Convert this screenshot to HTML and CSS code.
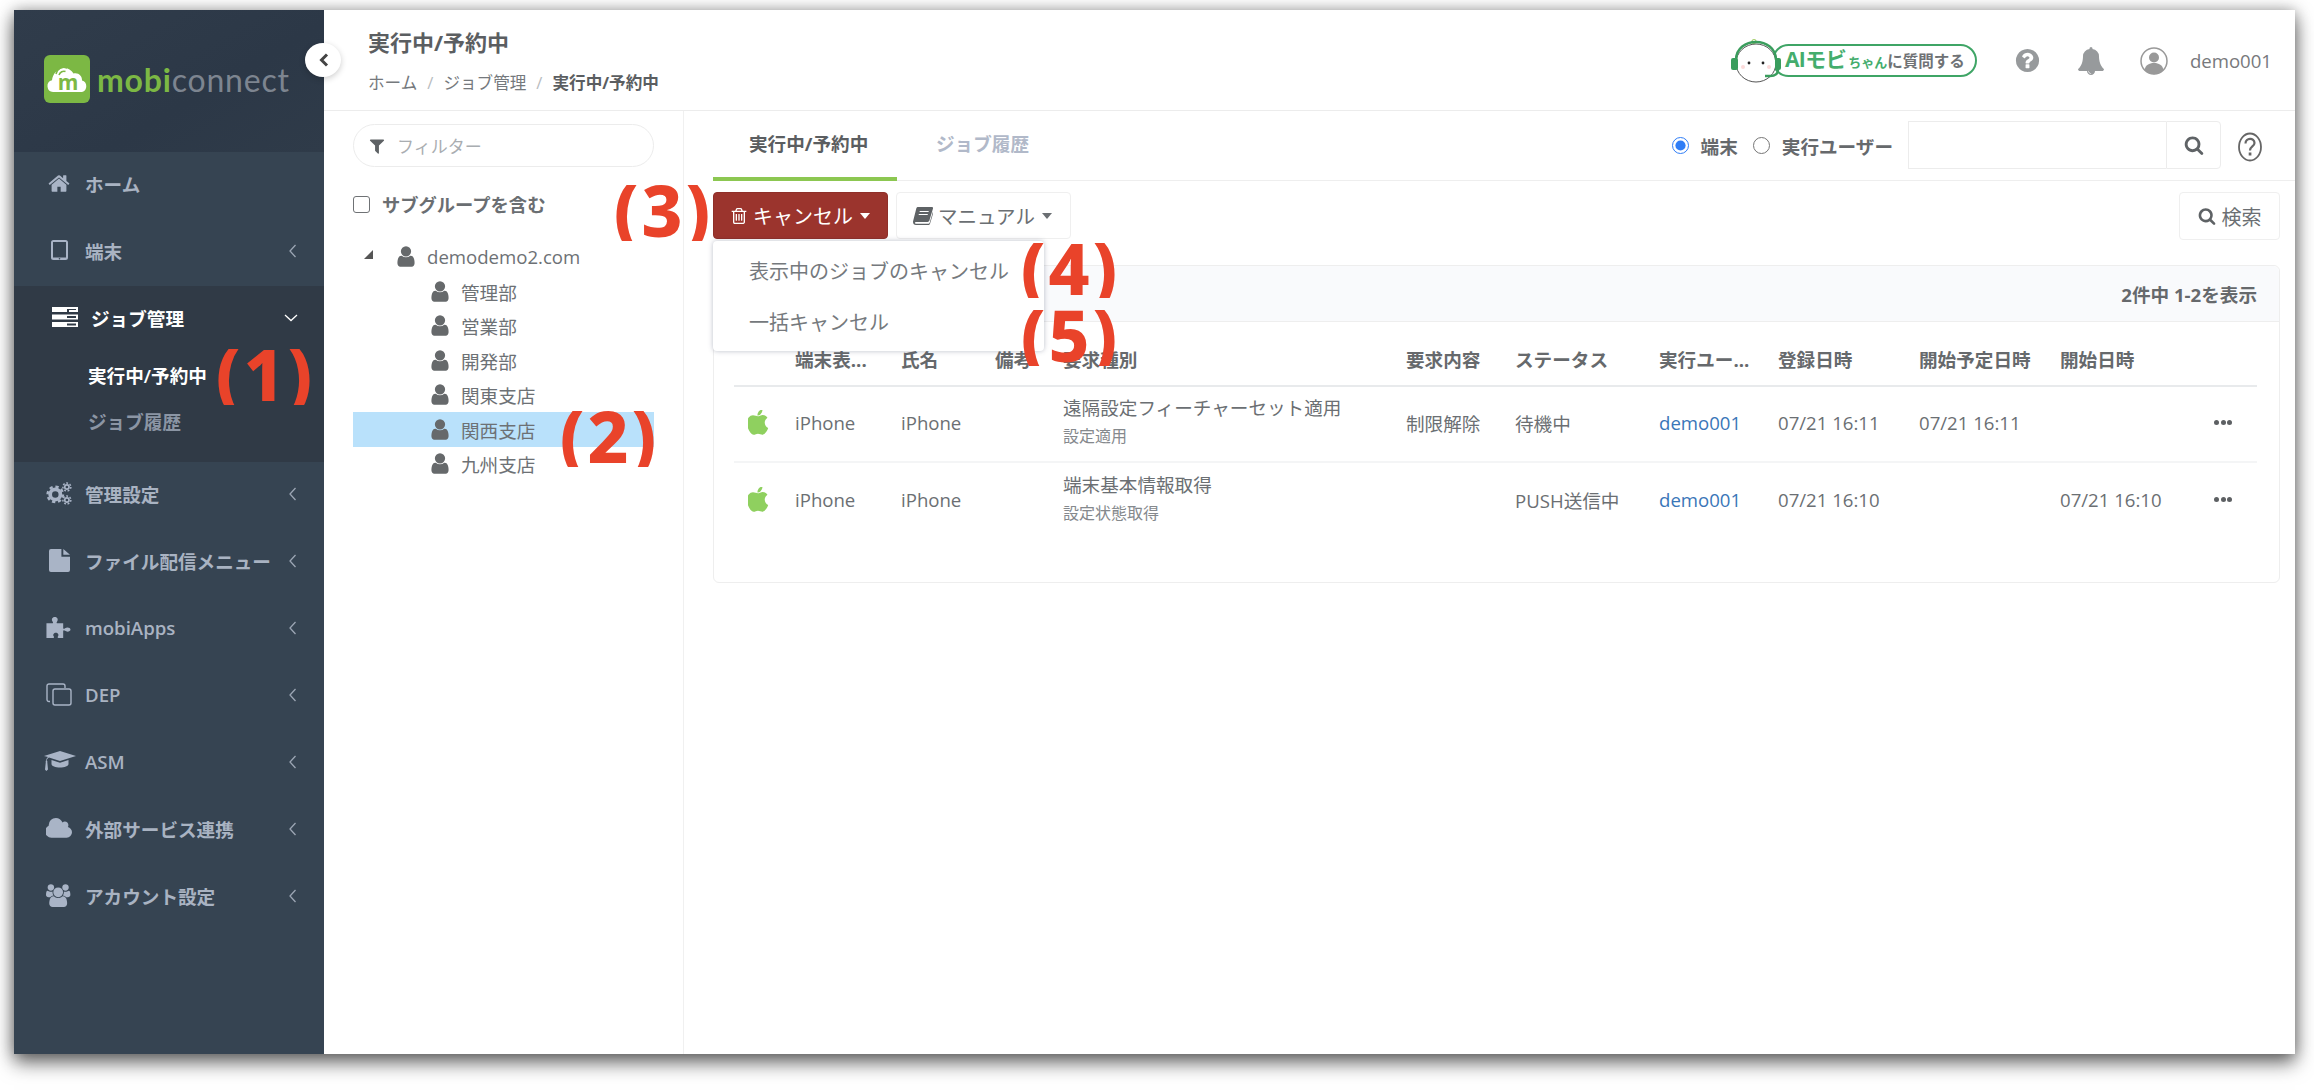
FILE: index.html
```html
<!DOCTYPE html>
<html lang="ja">
<head>
<meta charset="utf-8">
<title>実行中/予約中</title>
<link rel="stylesheet" href="styles.css">
</head>
<body>
<svg class="defs" aria-hidden="true">
  <symbol id="i-home" viewBox="0 0 1792 1792"><path d="M1472 992v480q0 26-19 45t-45 19h-384v-384h-256v384h-384q-26 0-45-19t-19-45v-480q0-1 .5-3t.5-3l575-474 575 474q1 2 1 6zm223-69l-62 74q-8 9-21 11h-3q-13 0-21-7l-692-577-692 577q-12 8-24 7-13-2-21-11l-62-74q-8-10-7-23.5t11-21.5l719-599q32-26 76-26t76 26l244 204v-195q0-14 9-23t23-9h192q14 0 23 9t9 23v408l219 182q10 8 11 21.5t-7 23.5z"/></symbol>
  <symbol id="i-user" viewBox="224 128 1344 1536"><path d="M1536 1399q0 109-62.5 187t-150.5 78h-854q-88 0-150.5-78t-62.5-187q0-85 8.5-160.5t31.5-152 58.5-131 94-89 134.5-34.5q131 128 313 128t313-128q76 0 134.5 34.5t94 89 58.5 131 31.5 152 8.5 160.5zm-256-887q0 159-112.5 271.5t-271.5 112.5-271.5-112.5-112.5-271.5 112.5-271.5 271.5-112.5 271.5 112.5 112.5 271.5z"/></symbol>
  <symbol id="i-search" viewBox="0 0 1792 1792"><path d="M1216 832q0-185-131.5-316.5t-316.5-131.5-316.5 131.5-131.5 316.5 131.5 316.5 316.5 131.5 316.5-131.5 131.5-316.5zm512 832q0 52-38 90t-90 38q-54 0-90-38l-343-342q-179 124-399 124-143 0-273.5-55.5t-225-150-150-225-55.5-273.5 55.5-273.5 150-225 225-150 273.5-55.5 273.5 55.5 225 150 150 225 55.5 273.5q0 220-124 399l343 343q37 37 37 90z"/></symbol>
  <symbol id="i-filter" viewBox="0 0 1792 1792"><path d="M1595 295q17 41-14 70l-493 493v742q0 42-39 59-13 5-25 5-27 0-45-19l-256-256q-19-19-19-45v-486l-493-493q-31-29-14-70 17-39 59-39h1280q42 0 59 39z"/></symbol>
  <symbol id="i-bell" viewBox="0 0 1792 1792"><path d="M912 1696q0-16-16-16-59 0-101.5-42.5t-42.5-101.5q0-16-16-16t-16 16q0 73 51.5 124.5t124.5 51.5q16 0 16-16zm816-288q0 52-38 90t-90 38h-448q0 106-75 181t-181 75-181-75-75-181h-448q-52 0-90-38t-38-90q50-42 91-88t85-119.5 74.5-158.5 50-206 19.5-260q0-152 117-282.5t307-158.5q-8-19-8-39 0-40 28-68t68-28 68 28 28 68q0 20-8 39 190 28 307 158.5t117 282.5q0 139 19.5 260t50 206 74.5 158.5 85 119.5 91 88z"/></symbol>
  <symbol id="i-qc" viewBox="0 0 1792 1792"><path d="M1024 1376v-192q0-14-9-23t-23-9h-192q-14 0-23 9t-9 23v192q0 14 9 23t23 9h192q14 0 23-9t9-23zm256-672q0-88-55.5-163t-138.5-116-170-41q-243 0-371 213-15 24 8 42l132 100q7 6 19 6 16 0 25-12 53-68 86-92 34-24 86-24 48 0 85.5 26t37.5 59q0 38-20 61t-68 45q-63 28-115.5 86.5t-52.5 125.5v36q0 14 9 23t23 9h192q14 0 23-9t9-23q0-19 21.5-49.5t54.5-49.5q32-18 49-28.5t46-35 44.5-48 28-60.5 12.5-81zm384 192q0 209-103 385.5t-279.5 279.5-385.5 103-385.5-103-279.5-279.5-103-385.5 103-385.5 279.5-279.5 385.5-103 385.5 103 279.5 279.5 103 385.5z"/></symbol>
  <symbol id="i-apple" viewBox="300 40 1300 1640"><path d="M1585 1215q-39 125-123 250-129 196-257 196-49 0-140-32-86-32-151-32-61 0-142 33-81 34-132 34-152 0-301-259-147-261-147-503 0-228 113-374 113-144 284-144 72 0 177 30 104 30 138 30 45 0 143-34 102-34 173-34 119 0 213 65 52 36 104 100-79 67-114 118-65 94-65 207 0 124 69 223t158 126zm-376-1173q0 61-29 136-30 75-93 138-54 54-108 72-37 11-104 17 3-149 78-257 74-107 250-148 1 3 2.5 11t2.5 11q0 3 .5 7.5t.5 7.5z"/></symbol>
  <symbol id="i-cloud" viewBox="0 224 1856 1312"><path d="M1856 1152q0 159-112.5 271.5t-271.5 112.5h-1088q-185 0-316.5-131.5t-131.5-316.5q0-132 71-241.5t187-163.5q-2-28-2-43 0-212 150-362t362-150q158 0 286.5 88t187.5 230q70-62 166-62 106 0 181 75t75 181q0 75-41 138 129 30 213 134.5t84 239.5z"/></symbol>
  <symbol id="i-users" viewBox="-64 0 2048 1792"><path d="M529 896q-162 5-265 128h-134q-82 0-138-40.5t-56-118.5q0-353 124-353 6 0 43.5 21t97.5 42.5 119 21.5q67 0 133-23-5 37-5 66 0 139 81 256zm1071 637q0 120-73 189.5t-194 69.5h-874q-121 0-194-69.5t-73-189.5q0-53 3.5-103.5t14-109 26.5-108.5 43-97.5 62-81 85.5-53.5 111.5-20q10 0 43 21.5t73 48 107 48 135 21.5 135-21.5 107-48 73-48 43-21.5q61 0 111.5 20t85.5 53.5 62 81 43 97.5 26.5 108.5 14 109 3.5 103.5zm-1024-1277q0 106-75 181t-181 75-181-75-75-181 75-181 181-75 181 75 75 181zm704 384q0 159-112.5 271.5t-271.5 112.5-271.5-112.5-112.5-271.5 112.5-271.5 271.5-112.5 271.5 112.5 112.5 271.5zm576 225q0 78-56 118.5t-138 40.5h-134q-103-123-265-128 81-117 81-256 0-29-5-66 66 23 133 23 59 0 119-21.5t97.5-42.5 43.5-21q124 0 124 353zm-128-609q0 106-75 181t-181 75-181-75-75-181 75-181 181-75 181 75 75 181z"/></symbol>
  <symbol id="i-trash" viewBox="128 128 1536 1536"><path d="M704 736v576q0 14-9 23t-23 9h-64q-14 0-23-9t-9-23v-576q0-14 9-23t23-9h64q14 0 23 9t9 23zm256 0v576q0 14-9 23t-23 9h-64q-14 0-23-9t-9-23v-576q0-14 9-23t23-9h64q14 0 23 9t9 23zm256 0v576q0 14-9 23t-23 9h-64q-14 0-23-9t-9-23v-576q0-14 9-23t23-9h64q14 0 23 9t9 23zm128 724v-948h-896v948q0 22 7 40.5t14.5 27 10.5 8.5h832q3 0 10.5-8.5t14.5-27 7-40.5zm-672-1076h448l-48-117q-7-9-17-11h-317q-10 2-17 11zm928 32v64q0 14-9 23t-23 9h-96v948q0 83-47 143.5t-113 60.5h-832q-66 0-113-58.5t-47-141.5v-952h-96q-14 0-23-9t-9-23v-64q0-14 9-23t23-9h309l70-167q15-37 54-63t79-26h320q40 0 79 26t54 63l70 167h309q14 0 23 9t9 23z"/></symbol>
  <symbol id="i-file" viewBox="0 0 22 24"><path d="M2 0h11v8h9v14a2 2 0 0 1-2 2H2a2 2 0 0 1-2-2V2a2 2 0 0 1 2-2zM15 0l7 6h-7z"/></symbol>
  <symbol id="i-tablet" viewBox="0 0 17 20"><path fill-rule="evenodd" d="M2.5 0h12A2.5 2.5 0 0 1 17 2.500v15a2.500 2.500 0 0 1-2.500 2.500h-12A2.500 2.500 0 0 1 0 17.500v-15A2.500 2.500 0 0 1 2.500 0zM2 2v15.500h13V2z"/><circle cx="8.500" cy="18.700" r=".8" fill="#364452"/></symbol>
  <symbol id="i-server" viewBox="0 0 26 20"><path fill-rule="evenodd" d="M0 0h26v5H17v-2h7V2H15v3H0zM0 7.500h26v5H0zM15 9v2h9V9zM0 15h26v5H0zM15 16.500v2h9v-2z"/></symbol>
  <symbol id="i-puzzle" viewBox="0 0 24 22"><path d="M0 7h5.500c1 0 1-1 .3-1.800C4.500 3.600 5.400 1 8 1s3.500 2.600 2.200 4.200c-.7.800-.7 1.800.3 1.800H16v4.500c0 1 1 1 1.800.3 1.400-1.300 5.200-1 5.200 1.200s-3.800 2.500-5.200 1.200c-.8-.7-1.800-.7-1.800.3V21h-4.500c-1 0-1-1-.3-1.800.9-1.200-.3-3.200-2.200-3.200s-3.100 2-2.200 3.200c.7.800.7 1.800-.3 1.800H0z"/></symbol>
  <symbol id="i-copy" viewBox="0 0 26 23"><g fill="none" stroke="currentColor" stroke-width="1.400"><path d="M4 18.500H3a2 2 0 0 1-2-2V3a2 2 0 0 1 2-2h14a2 2 0 0 1 2 2v2"/><rect x="7" y="6" width="18" height="16" rx="2"/></g></symbol>
  <symbol id="i-cap" viewBox="0 0 32 20"><path d="M16 0l16 5-16 5-11-3.500C3.800 7.200 3 8 2.800 9.500 3.300 9.800 3.500 10.300 3.300 11l.7 7.500-1.700 1.500-1.300-1.500.8-7.500C1.500 10.300 1.700 9.800 2.200 9.500 2.300 8 2.800 6.800 4 6L0 5zM7.500 9L16 11.700 24.500 9v4c0 2-4 3.500-8.500 3.500S7.500 15 7.500 13z"/></symbol>
  <symbol id="i-cog" viewBox="0 0 28 24"><g fill="none" stroke="currentColor"><circle cx="10" cy="13" r="5.500" stroke-width="4"/><circle cx="10" cy="13" r="8.300" stroke-width="2.600" stroke-dasharray="3.500 3"/><circle cx="22.500" cy="5" r="2.300" stroke-width="1.800"/><circle cx="22.500" cy="5" r="4.300" stroke-width="1.600" stroke-dasharray="2 1.800"/><circle cx="22.500" cy="19" r="2.300" stroke-width="1.800"/><circle cx="22.500" cy="19" r="4.300" stroke-width="1.600" stroke-dasharray="2 1.800"/></g></symbol>
  <symbol id="i-book" viewBox="0 0 20 18"><path d="M5 0h14c1 0 1.300.8 1 1.600l-3.600 12c-.3.900-.9 1.400-1.900 1.400H3c-.8 0-1.200.4-1.100 1 .1.500.5.800 1.100.8h12.500c.6 0 .9-.3 1.100-.8L20 4.500l.5.700-3.500 11.500c-.3.800-.9 1.300-1.800 1.300H3c-1.700 0-3-1.300-3-3 0-.5.100-.9.200-1.300L3.300 1.500C3.600.5 4.100 0 5 0zM6.800 4l-.3 1h9l.3-1zM5.900 7l-.3 1h9l.3-1z"/></symbol>
  <symbol id="i-chev" viewBox="0 0 8 14"><path d="M6.500 1L1 7l5.500 6" fill="none" stroke="currentColor" stroke-width="1.300"/></symbol>
  <symbol id="i-chevd" viewBox="0 0 14 8"><path d="M1 1l6 5.500L13 1" fill="none" stroke="currentColor" stroke-width="1.300"/></symbol>
</svg>

<div class="window">
  <aside class="sidebar">
    <div class="brand">
      <svg class="brand-mark" viewBox="0 0 46 48"><rect width="46" height="48" rx="6" fill="#7cb844"/><path d="M9 37a6 6 0 0 1-1-11.800C8.500 19 14 13 20 13c4 0 7.500 2 9.500 5.500C34 17 38.500 21 38 25.500A6 6 0 0 1 38 37z" fill="#fff"/><path d="M12 19c1-5 6-8 11-6M15 20c1-3 4-4.500 6.500-3.500" fill="none" stroke="#7cb844" stroke-width="1.500"/><text x="24" y="35" class="brand-m">m</text></svg>
      <span class="brand-name"><span class="brand-green">mobi</span><span class="brand-grey">connect</span></span>
    </div>
    <nav class="menu">
      <a class="menu-item"><svg class="mi"><use href="#i-home"/></svg><span class="menu-label">ホーム</span></a>
      <a class="menu-item"><svg class="mi mi-tablet"><use href="#i-tablet"/></svg><span class="menu-label">端末</span><svg class="chev"><use href="#i-chev"/></svg></a>
      <div class="menu-group">
        <a class="menu-item menu-item-open"><svg class="mi mi-server"><use href="#i-server"/></svg><span class="menu-label">ジョブ管理</span><svg class="chevd"><use href="#i-chevd"/></svg></a>
        <a class="sub-item sub-active">実行中/予約中</a>
        <a class="sub-item">ジョブ履歴</a>
      </div>
      <a class="menu-item"><svg class="mi"><use href="#i-cog"/></svg><span class="menu-label">管理設定</span><svg class="chev"><use href="#i-chev"/></svg></a>
      <a class="menu-item"><svg class="mi mi-file"><use href="#i-file"/></svg><span class="menu-label">ファイル配信メニュー</span><svg class="chev"><use href="#i-chev"/></svg></a>
      <a class="menu-item"><svg class="mi"><use href="#i-puzzle"/></svg><span class="menu-label">mobiApps</span><svg class="chev"><use href="#i-chev"/></svg></a>
      <a class="menu-item"><svg class="mi"><use href="#i-copy"/></svg><span class="menu-label">DEP</span><svg class="chev"><use href="#i-chev"/></svg></a>
      <a class="menu-item"><svg class="mi mi-wide"><use href="#i-cap"/></svg><span class="menu-label">ASM</span><svg class="chev"><use href="#i-chev"/></svg></a>
      <a class="menu-item"><svg class="mi"><use href="#i-cloud"/></svg><span class="menu-label">外部サービス連携</span><svg class="chev"><use href="#i-chev"/></svg></a>
      <a class="menu-item"><svg class="mi"><use href="#i-users"/></svg><span class="menu-label">アカウント設定</span><svg class="chev"><use href="#i-chev"/></svg></a>
    </nav>
  </aside>

  <main class="main">
    <header class="topbar">
      <div class="crumbs">
        <h1 class="page-title">実行中/予約中</h1>
        <div class="breadcrumb"><span>ホーム</span><i>/</i><span>ジョブ管理</span><i>/</i><b>実行中/予約中</b></div>
      </div>
      <div class="top-actions">
        <div class="ai-btn">
          <svg class="ai-face" viewBox="0 0 54 46"><circle cx="24" cy="3.500" r="2" fill="none" stroke="#a5cf6b" stroke-width="1.200"/><ellipse cx="26" cy="25" rx="20" ry="19" fill="#fff" stroke="#555" stroke-width="1"/><path d="M6 22C6 -2 46 -2 46 22" fill="none" stroke="#3a9d5d" stroke-width="2.400"/><rect x="1" y="20" width="7" height="12" rx="2" fill="#3a9d5d"/><rect x="45" y="20" width="6" height="12" rx="2" fill="#3a9d5d"/><path d="M48 32c0 4-3 6-8 6h-5" fill="none" stroke="#3a9d5d" stroke-width="2.400"/><circle cx="19" cy="25" r="1.400" fill="#222"/><circle cx="33" cy="25" r="1.400" fill="#222"/><circle cx="13" cy="29" r="2" fill="#fcdada"/><circle cx="39" cy="29" r="2" fill="#fcdada"/></svg>
          <span class="ai-text"><b class="ai-a">AIモビ</b><b class="ai-b">ちゃん</b><b class="ai-c">に質問する</b></span>
        </div>
        <svg class="top-q"><use href="#i-qc"/></svg>
        <svg class="top-bell"><use href="#i-bell"/></svg>
        <svg class="top-user" viewBox="0 0 28 28"><circle cx="14" cy="14" r="13" fill="#fff" stroke="#999" stroke-width="1.500"/><circle cx="14" cy="10.500" r="5" fill="#999"/><path d="M4.500 23c1-5 4.500-7 9.500-7s8.500 2 9.500 7a13 13 0 0 1-19 0z" fill="#999"/></svg>
        <span class="top-name">demo001</span>
      </div>
    </header>

    <div class="content">
      <section class="tree-panel">
        <div class="filter"><svg class="filter-icon"><use href="#i-filter"/></svg><span>フィルター</span></div>
        <label class="subgroup"><input type="checkbox" class="check"><span>サブグループを含む</span></label>
        <ul class="tree">
          <li class="tree-root"><span class="tree-caret"></span><svg class="ti"><use href="#i-user"/></svg><span>demodemo2.com</span></li>
          <li class="tree-node"><svg class="ti"><use href="#i-user"/></svg><span>管理部</span></li>
          <li class="tree-node"><svg class="ti"><use href="#i-user"/></svg><span>営業部</span></li>
          <li class="tree-node"><svg class="ti"><use href="#i-user"/></svg><span>開発部</span></li>
          <li class="tree-node"><svg class="ti"><use href="#i-user"/></svg><span>関東支店</span></li>
          <li class="tree-node tree-selected"><svg class="ti"><use href="#i-user"/></svg><span>関西支店</span></li>
          <li class="tree-node"><svg class="ti"><use href="#i-user"/></svg><span>九州支店</span></li>
        </ul>
      </section>

      <section class="job-panel">
        <div class="tabbar">
          <a class="tab tab-active">実行中/予約中</a>
          <a class="tab tab-next">ジョブ履歴</a>
          <div class="tab-tools">
            <label class="radio-label"><input type="radio" name="scope" class="radio" checked><span>端末</span></label>
            <label class="radio-label"><input type="radio" name="scope" class="radio"><span>実行ユーザー</span></label>
            <div class="searchbox"><div class="search-input"></div><div class="search-addon"><svg class="search-icon"><use href="#i-search"/></svg></div></div>
            <svg class="help-outline" viewBox="0 0 24 30"><ellipse cx="12" cy="15" rx="11" ry="13.500" fill="none" stroke="#666" stroke-width="1.800"/><path d="M7.500 11.500c0-6 9-6 9-.5 0 3.500-4.500 3.500-4.500 7.500" fill="none" stroke="#666" stroke-width="2.200"/><rect x="10.700" y="20.500" width="2.700" height="3" fill="#666"/></svg>
          </div>
        </div>

        <div class="toolbar">
          <div class="dropdown-wrap">
            <button class="btn btn-danger"><svg class="btn-icon"><use href="#i-trash"/></svg>キャンセル<span class="caret"></span></button>
            <div class="dropdown">
              <a class="dropdown-item">表示中のジョブのキャンセル</a>
              <a class="dropdown-item">一括キャンセル</a>
            </div>
          </div>
          <button class="btn btn-plain"><svg class="btn-icon btn-book"><use href="#i-book"/></svg>マニュアル<span class="caret"></span></button>
          <button class="btn btn-search"><svg class="btn-icon btn-mag"><use href="#i-search"/></svg>検索</button>
        </div>

        <div class="card">
          <div class="card-head">2件中 1-2を表示</div>
          <div class="table-wrap">
            <table class="jobs">
              <colgroup><col class="c0"><col class="c1"><col class="c2"><col class="c3"><col class="c4"><col class="c5"><col class="c6"><col class="c7"><col class="c8"><col class="c9"><col class="c10"><col class="c11"></colgroup>
              <thead>
                <tr><th></th><th>端末表...</th><th>氏名</th><th>備考</th><th>要求種別</th><th>要求内容</th><th>ステータス</th><th>実行ユー...</th><th>登録日時</th><th>開始予定日時</th><th>開始日時</th><th></th></tr>
              </thead>
              <tbody>
                <tr>
                  <td><svg class="apple"><use href="#i-apple"/></svg></td><td>iPhone</td><td>iPhone</td><td></td>
                  <td><div class="req">遠隔設定フィーチャーセット適用</div><div class="req-sub">設定適用</div></td>
                  <td>制限解除</td><td>待機中</td><td><a class="user-link">demo001</a></td><td>07/21 16:11</td><td>07/21 16:11</td><td></td>
                  <td><span class="dots"><i></i><i></i><i></i></span></td>
                </tr>
                <tr>
                  <td><svg class="apple"><use href="#i-apple"/></svg></td><td>iPhone</td><td>iPhone</td><td></td>
                  <td><div class="req">端末基本情報取得</div><div class="req-sub">設定状態取得</div></td>
                  <td></td><td>PUSH送信中</td><td><a class="user-link">demo001</a></td><td>07/21 16:10</td><td></td><td>07/21 16:10</td>
                  <td><span class="dots"><i></i><i></i><i></i></span></td>
                </tr>
              </tbody>
            </table>
          </div>
        </div>
      </section>
    </div>
  </main>

  <button class="collapse"><svg class="collapse-icon" viewBox="0 0 10 14"><path d="M8 1.500L2.500 7 8 12.500" fill="none" stroke="#444" stroke-width="3"/></svg></button>
  <div class="note note-1">(1)</div>
  <div class="note note-2">(2)</div>
  <div class="note note-3">(3)</div>
  <div class="note note-4">(4)</div>
  <div class="note note-5">(5)</div>
</div>
</body>
</html>
```
FILE: styles.css
```css
* { box-sizing: border-box; }
html, body { margin: 0; padding: 0; background: #fff; overflow: hidden; }
body {
  width: 2314px;
  height: 1092px;
  font-family: "Open Sans", "Noto Sans CJK JP", sans-serif;
  font-size: 18.6px;
  color: #6b6f73;
}
.defs { position: absolute; width: 0; height: 0; }
a { color: inherit; text-decoration: none; }
ul { list-style: none; margin: 0; padding: 0; }
svg { fill: currentColor; display: block; }

.window {
  position: relative;
  display: flex;
  width: 2281px;
  height: 1044px;
  margin: 10px 0 0 14px;
  background: #fff;
  box-shadow: 0 9px 18px rgba(0, 0, 0, .55), 0 0 14px rgba(0, 0, 0, .3);
}

/* Sidebar */
.sidebar { width: 310px; flex: none; background: #364452; }
.brand {
  height: 142px;
  display: flex;
  align-items: flex-start;
  padding: 45px 0 0 30px;
  background: linear-gradient(150deg, #303c4b 0%, #2c3847 60%, #2f3b49 100%);
}
.brand-mark { width: 46px; height: 48px; flex: none; }
.brand-m { font: 700 21px "Open Sans", sans-serif; fill: #7cb844; text-anchor: middle; }
.brand-name {
  margin: 5px 0 0 7px;
  font: 400 32px/40px "Lato", sans-serif;
  letter-spacing: .8px;
}
.brand-green { color: #7cb844; font-weight: 700; }
.brand-grey { color: #7d8590; }

.menu { display: flex; flex-direction: column; }
.menu-item {
  position: relative;
  height: 67px;
  display: flex;
  align-items: center;
  padding: 0 0 5px 71px;
  color: #a9b3c2;
  font-size: 18.6px;
  font-weight: 600;
}
.mi { position: absolute; left: 32px; top: 20px; width: 26px; height: 23px; color: #a9b4c6; }
.mi-tablet { left: 37px; top: 21px; width: 17px; height: 20px; }
.mi-server { left: 38px; top: 21px; width: 26px; height: 20px; color: #fff; }
.mi-file { left: 35px; top: 19px; width: 21px; height: 25px; }
.mi-wide { left: 30px; top: 21px; width: 32px; height: 20px; }
.chev { position: absolute; left: 275px; top: 25px; width: 8px; height: 14px; color: #9ca6b4; }
.chevd { position: absolute; left: 270px; top: 28px; width: 14px; height: 8px; color: #fff; }
.menu-group { background: #303a46; padding-bottom: 17px; }
.menu-item-open { color: #fff; padding-left: 77px; }
.sub-item {
  display: flex;
  align-items: center;
  height: 46px;
  padding: 0 0 3px 74px;
  font-size: 18.6px;
  font-weight: 600;
  color: #8b95a4;
}
.sub-active { color: #fff; }

/* Top bar */
.main { flex: 1; min-width: 0; display: flex; flex-direction: column; }
.topbar {
  height: 101px;
  flex: none;
  display: flex;
  justify-content: space-between;
  border-bottom: 1px solid #ececec;
  padding: 15px 23px 0 44px;
}
.page-title { margin: 0; font-size: 22px; line-height: 34px; font-weight: 700; color: #5b5e61; }
.breadcrumb { display: flex; align-items: center; margin-top: 11px; font-size: 16.600px; line-height: 26px; color: #75797d; }
.breadcrumb i { margin: 0 10px; color: #b8bcc0; font-style: normal; }
.breadcrumb b { margin-left: 0; color: #5b5e61; }
.top-actions { display: flex; align-items: center; height: 71px; }
.ai-btn {
  position: relative;
  width: 205px;
  height: 33px;
  margin-right: 37px;
  border: 2px solid #3fa566;
  border-radius: 17px;
  background: #fff;
}
.ai-face { position: absolute; left: -44px; top: -8px; width: 54px; height: 46px; }
.ai-text { position: absolute; left: 11px; top: 0; display: flex; align-items: baseline; line-height: 27px; white-space: nowrap; }
.ai-a { font-size: 21px; color: #44ad6d; letter-spacing: -.5px; }
.ai-b { font-size: 13px; color: #44ad6d; margin-left: 2px; }
.ai-c { font-size: 15.500px; color: #6f7275; }
.top-q { width: 27px; height: 27px; color: #979a9c; margin-right: 36px; }
.top-bell { width: 28px; height: 28px; color: #979a9c; margin-right: 35px; }
.top-user { width: 28px; height: 28px; margin-right: 22px; }
.top-name { font-size: 18.600px; color: #77797c; }

/* Layout below bar */
.content { flex: 1; display: flex; min-height: 0; }
.tree-panel { width: 360px; flex: none; border-right: 1px solid #f0f0f0; padding: 13px 29px 0 29px; }
.filter {
  height: 43px;
  display: flex;
  align-items: center;
  border: 1px solid #ececec;
  border-radius: 22px;
  padding-left: 14px;
  font-size: 17px;
  color: #a9adb1;
}
.filter-icon { width: 18px; height: 18px; margin-right: 11px; color: #5e6265; }
.subgroup { display: flex; align-items: center; margin-top: 24px; height: 26px; font-size: 18.300px; font-weight: 700; color: #6a6e72; }
.check {
  appearance: none;
  width: 17px;
  height: 17px;
  margin: 0 12px 0 0;
  border: 1px solid #6f7275;
  border-radius: 3px;
  background: #fff;
}
.tree { margin-top: 22px; font-size: 18.600px; color: #6d7175; }
.tree-root { display: flex; align-items: center; height: 35px; position: relative; padding-left: 44px; }
.tree-caret {
  position: absolute;
  left: 11px;
  top: 11px;
  border-style: solid;
  border-width: 0 0 9px 9px;
  border-color: transparent transparent #555 transparent;
}
.tree-node { display: flex; align-items: center; height: 34.500px; padding-left: 78px; }
.tree-selected { background: #b9e1fb; }
.ti { width: 18px; height: 21px; margin-right: 12px; color: #66696b; flex: none; }
.tree-node .ti { width: 18px; margin-right: 12px; }

/* Job panel */
.job-panel { flex: 1; min-width: 0; padding-left: 29px; }
.tabbar {
  display: flex;
  height: 70px;
  border-bottom: 1px solid #eeeeee;
  font-size: 18.600px;
  font-weight: 700;
}
.tab { height: 70px; line-height: 66px; }
.tab-active { width: 184px; padding-left: 36px; color: #5b5e61; border-bottom: 4px solid #8cc751; }
.tab-next { padding-left: 39px; color: #b1b9c9; }
.tab-tools { margin-left: auto; display: flex; align-items: flex-start; padding: 10px 33px 0 0; color: #66696c; }
.radio-label { display: flex; align-items: center; height: 48px; margin-right: 15px; }
.radio { width: 17px; height: 17px; margin: 0 12px 0 0; accent-color: #2f7df6; }
.searchbox { display: flex; height: 48px; width: 313px; }
.search-input { width: 258px; border: 1px solid #ececec; border-right: 0; }
.search-addon { flex: 1; display: flex; align-items: center; justify-content: center; border: 1px solid #ececec; border-radius: 0 4px 4px 0; }
.search-icon { width: 20px; height: 20px; color: #5f6366; }
.help-outline { width: 24px; height: 30px; margin: 11px 0 0 17px; }

.toolbar { display: flex; gap: 8px; margin-top: 11px; padding-right: 15px; }
.dropdown-wrap { position: relative; }
.btn {
  display: flex;
  align-items: center;
  height: 47px;
  border-radius: 4px;
  padding: 0;
  font: 400 20px "Open Sans", "Noto Sans CJK JP", sans-serif;
}
.btn-danger { width: 175px; padding-left: 17px; background: #9b342d; border: 1px solid #8f2f29; color: #fff; }
.btn-plain { width: 175px; padding-left: 16px; background: #fff; border: 1px solid #efefef; color: #6b6f73; font-size: 19.500px; }
.btn-search { width: 101px; height: 48px; margin-left: auto; justify-content: center; background: #fff; border: 1px solid #efefef; color: #6b6f73; }
.btn-icon { width: 16px; height: 16px; margin-right: 6px; }
.btn-book { width: 20px; height: 18px; margin-right: 5px; color: #5e6265; }
.btn-mag { width: 18px; height: 18px; color: #5e6265; }
.caret {
  margin-left: 7px;
  border-style: solid;
  border-width: 6px 5.500px 0 5.500px;
  border-color: currentColor transparent transparent transparent;
}
.dropdown {
  position: absolute;
  z-index: 2;
  left: 0;
  top: 49px;
  width: 331px;
  height: 110px;
  background: #fff;
  border-radius: 4px;
  box-shadow: 0 0 5px rgba(60, 70, 100, .35);
  font-size: 20px;
  color: #75797d;
  padding-top: 4px;
}
.dropdown-item { display: flex; align-items: center; height: 51px; padding-left: 36px; }

.card { margin-top: 25px; margin-right: 15px; height: 318px; border: 1px solid #eeeeee; border-radius: 6px; }
.card-head {
  height: 56px;
  display: flex;
  align-items: center;
  justify-content: flex-end;
  padding-right: 22px;
  background: #f9fafc;
  border-bottom: 1px solid #eeeeee;
  border-radius: 6px 6px 0 0;
  font-size: 18.600px;
  font-weight: 700;
  color: #66696c;
}
.table-wrap { padding: 0 20px; }
.jobs { width: 1523px; table-layout: fixed; border-collapse: collapse; }
.c0 { width: 61px; } .c1 { width: 106px; } .c2 { width: 94px; } .c3 { width: 68px; }
.c4 { width: 343px; } .c5 { width: 109px; } .c6 { width: 144px; } .c7 { width: 119px; }
.c8 { width: 141px; } .c9 { width: 141px; } .c10 { width: 154px; } .c11 { width: 43px; }
.jobs th { height: 64px; padding: 10px 0 0; text-align: left; font-size: 18.6px; font-weight: 700; color: #66696c; white-space: nowrap; border-bottom: 2px solid #e8eaec; }
.jobs td { height: 76px; padding: 0 0 3px; border-bottom: 2px solid #f4f5f6; white-space: nowrap; }
.jobs tbody tr:last-child td { border-bottom: 0; }
.apple { width: 21px; height: 25px; margin-left: 14px; color: #8fd05f; }
.req { line-height: 28px; }
.req-sub { font-size: 16px; line-height: 29px; color: #85898d; }
.user-link { color: #3a76b8; }
.dots { display: flex; gap: 1.500px; }
.dots i { width: 5px; height: 5px; border-radius: 50%; background: #5d6063; }

/* Overlays */
.collapse {
  position: absolute;
  left: 291px;
  top: 33px;
  width: 36px;
  height: 34px;
  padding: 0 0 0 14px;
  border: 0;
  border-radius: 50%;
  background: #fff;
  box-shadow: 0 2px 6px rgba(0, 0, 0, .2);
}
.collapse-icon { width: 10px; height: 14px; }
.note {
  position: absolute;
  z-index: 3;
  width: 98px;
  height: 63px;
  display: flex;
  align-items: center;
  justify-content: center;
  padding-left: 3px;
  color: #e9432a;
  font: 800 71px/63px "Noto Sans", sans-serif;
  letter-spacing: 3px;
  white-space: nowrap;
  clip-path: inset(0);
}
.note-1 { left: 201px; top: 332px; }
.note-2 { left: 545px; top: 394px; }
.note-3 { left: 599px; top: 168px; }
.note-4 { left: 1006px; top: 227px; height: 61px; }
.note-5 { left: 1006px; top: 293px; }
```
